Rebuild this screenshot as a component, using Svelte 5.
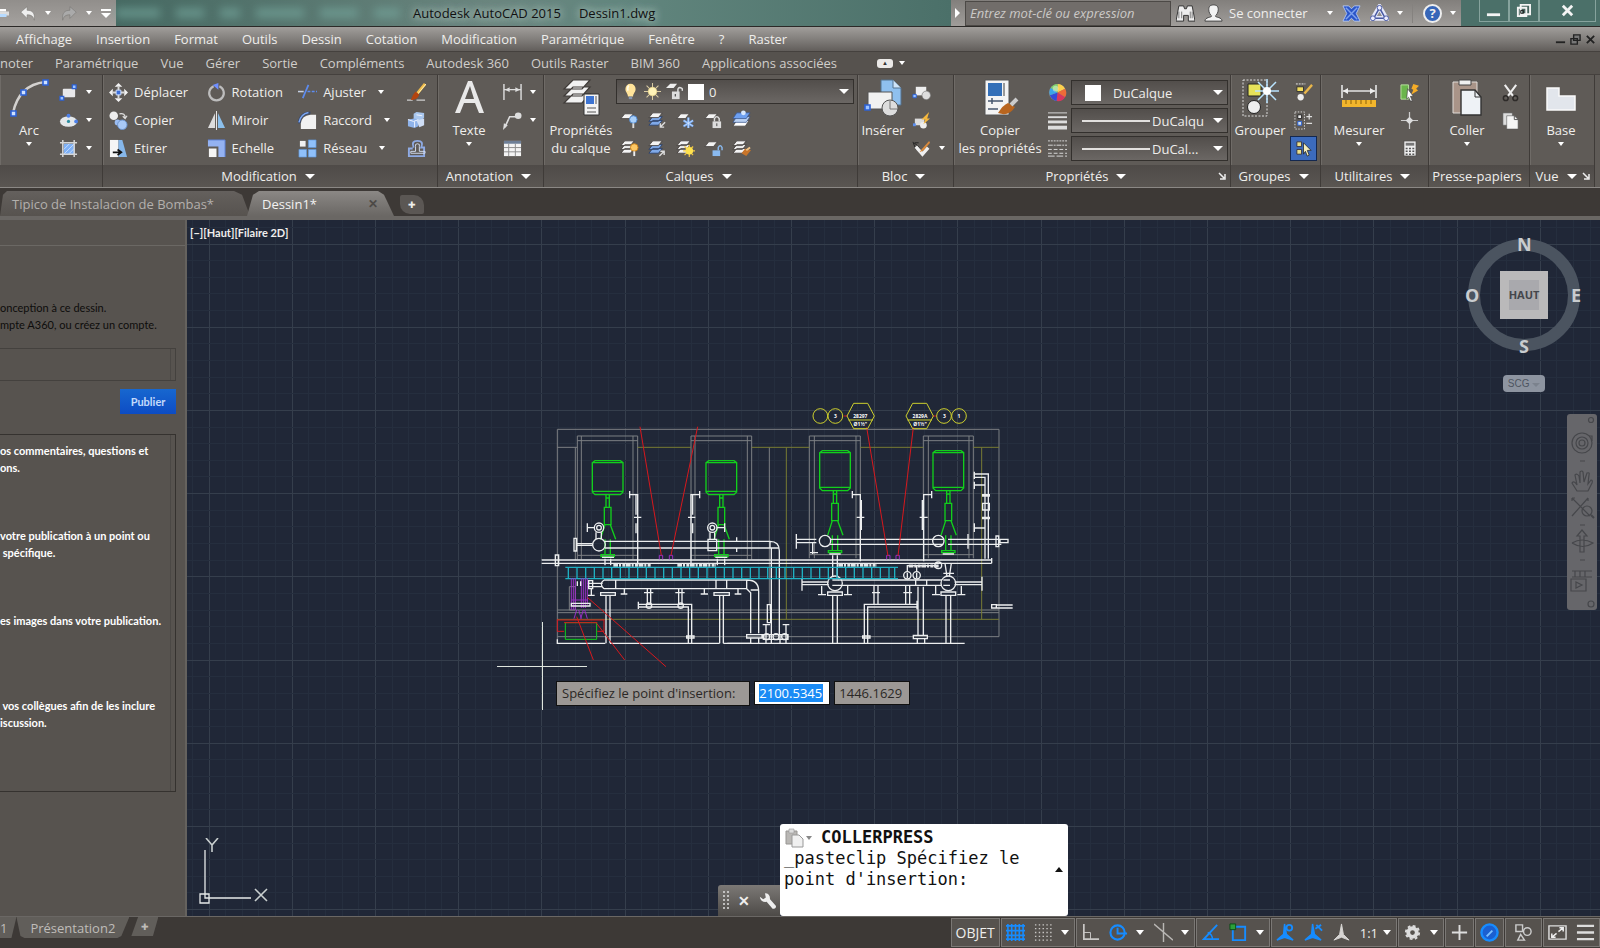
<script>
const menus = ['Affichage', 'Insertion', 'Format', 'Outils', 'Dessin', 'Cotation', 'Modification', 'Paramétrique', 'Fenêtre', '?', 'Raster']
const tabs = ['noter', 'Paramétrique', 'Vue', 'Gérer', 'Sortie', 'Compléments', 'Autodesk 360', 'Outils Raster', 'BIM 360', 'Applications associées']

const modify = [
  {icon: 'move', label: 'Déplacer'},
  {icon: 'rotate', label: 'Rotation'},
  {icon: 'trim', label: 'Ajuster', more: true},
  {icon: 'brush', name: 'Effacer'},
  {icon: 'copy', label: 'Copier'},
  {icon: 'mirror', label: 'Miroir'},
  {icon: 'fillet', label: 'Raccord', more: true},
  {icon: 'explode', name: 'Décomposer'},
  {icon: 'stretch', label: 'Etirer'},
  {icon: 'scale', label: 'Echelle'},
  {icon: 'array', label: 'Réseau', more: true},
  {icon: 'offset', name: 'Décaler'},
]
const layerTools = ['layerOff', 'layerIso', 'layerFreeze', 'layerLock', 'layerCurrent', 'layerOn', 'layerUniso', 'layerThaw', 'layerUnlock', 'layerMatch']

const notes = [
  ['os commentaires, questions et', 'ons.'],
  ['votre publication à un point ou', ' spécifique.'],
  ['es images dans votre publication.', ''],
  [' vos collègues afin de les inclure', 'iscussion.'],
]

let pointX = '2100.5345'
let pointY = '1446.1629'
let keyword = ''

// grid: one strong line for every five faint ones
const step = 83.2
const lines = (start, count) => Array.from({length: count}, (_, i) => ({at: Math.round(start + i * step / 5), major: i % 5 === 0}))
const columns = lines(21.5 - step, 150)
const rows = lines(23.5 - step, 100)

const sheets = '<path d="M5 3h10l-4 5H1zM5 7h10l-4 5H1zM5 11h10l-4 5H1z" fill="#f4f4f4" stroke="#44403d" stroke-width=".9"/>'
const blueSheets = '<path d="M5 7h10l-4 5H1zM5 11h10l-4 5H1z" fill="#7fa9e8" stroke="#2c3f66" stroke-width=".9"/><path d="M5 3h10l-4 5H1z" fill="#f4f4f4" stroke="#44403d" stroke-width=".9"/>'
const sheet = '<path d="M5 4h9l-4 5H1z" fill="#f4f4f4" stroke="#44403d" stroke-width=".8"/>'

const icons = {
  rect: '<rect x="4" y="6" width="13" height="9" rx="1" fill="#e8e8ea"/><path d="M14 2h4v4h-4zM1 14h4v4H1z" fill="#9cc3ff" stroke="#2d62d6" stroke-width="1.3"/>',
  ellipse: '<ellipse cx="10" cy="11" rx="9" ry="5.5" fill="#e3e7ea"/><circle cx="10" cy="11" r="1.7" fill="#2d8ea0"/><circle cx="10" cy="5" r="2" fill="#4c80ea"/><circle cx="18" cy="11" r="2" fill="#4c80ea"/>',
  hatch: '<path d="M5 5h11v11H5z" fill="#7eb0f5"/><path d="M5 11l6-6M5 16L16 5M10 16l6-6" stroke="#c6ddff"/><path d="M4 1v18M16 1v18M1 4h18M1 16h18" stroke="#d5d5d5" stroke-width="1.6"/>',
  move: '<path d="M10 0l4 4h-8zM10 20l4-4h-8zM0 10l4-4v8zM20 10l-4-4v8z" fill="#f2f2f2"/><path d="M10 4v12M4 10h12" stroke="#d7d7d7" stroke-width="2"/><path d="M7.500 7.500h5v5h-5z" fill="#3d6fd9" stroke="#cfe0ff"/>',
  copy: '<circle cx="5" cy="5" r="4.500" fill="#eee"/><circle cx="9" cy="12" r="3" fill="#9bbdf2"/><circle cx="14" cy="14.500" r="5" fill="#a8c8f5" stroke="#6d93cd"/><path d="M11 3c4-1 6 1 6 4m-2.500-1.500L17 8l2-3" fill="none" stroke="#ddd" stroke-width="1.300"/>',
  stretch: '<path d="M1 1h9v18H1z" fill="#f5f5f5"/><path d="M10 1h4l5 18h-9z" fill="#86b7ea"/><path d="M4 14h8m-3-3l4 3-4 3" stroke="#111" stroke-width="1.800" fill="none"/>',
  rotate: '<path d="M7 3.500A7.700 7.700 0 1 0 13 3.500" fill="none" stroke="#bdbdbd" stroke-width="2.300"/><path d="M6 2l6-2v7z" fill="#6f8fff"/>',
  mirror: '<path d="M8.500 2v16H1z" fill="#ddd"/><path d="M11.500 2v16H19z" fill="#8cc0ec"/><path d="M10 0v20" stroke="#eee"/>',
  scale: '<path d="M1 1h18v18H12V8H1z" fill="#94b2f2"/><path d="M2 10h8v9H2z" fill="#f5f5f5"/><path d="M1 1h18v18" fill="none" stroke="#5d7fd6"/>',
  trim: '<path d="M0 9h6" stroke="#c6d0e3" stroke-width="1.600"/><path d="M10 9h11" stroke="#5d8cf0" stroke-width="1.600" stroke-dasharray="3 1.500"/><path d="M11 2L5 16" stroke="#5d8cf0" stroke-width="1.800"/>',
  fillet: '<path d="M3 19V13Q4 5 13 4h6v15z" fill="#f1f1f1"/><path d="M1 13Q2 2 13 2" fill="none" stroke="#3a4b6e" stroke-width="3"/><path d="M1 12Q3 3 11 1.500" fill="none" stroke="#7da7f0" stroke-width="1.500"/>',
  array: '<path d="M2 2h6v6H2z" fill="#f1f1f1"/><path d="M11 1h8v8h-8zM1 11h8v8H1zM11 11h8v8h-8z" fill="#8fc0fa" stroke="#5f95d8" stroke-width=".7"/>',
  brush: '<path d="M0 18h6M10 18h9" stroke="#cfcfcf" stroke-width="1.500"/><path d="M19 1l-9 11" stroke="#f2bd4b" stroke-width="3"/><path d="M20 1l-9 11" stroke="#fff0b4"/><path d="M9 9l4 3q-2 6-9 6 2-6 5-9z" fill="#b4440f"/>',
  explode: '<path d="M7 3l3-2 8 1v5l-3 3-8-1z" fill="#a9c7ee"/><path d="M1 9l7-1 4 1v7l-4 2-7-2z" fill="#8fb3ea"/><path d="M10 10l8-2v7l-5 2z" fill="#cfdef5"/><path d="M1 9l6 2 5-2M8 11v6M10 4l6 1" stroke="#f1f6ff" fill="none"/>',
  offset: '<path d="M7 9q-3-7 4-7t4 7h3v9H2V10h4" fill="none" stroke="#8fabe4" stroke-width="2"/><path d="M9 8q-1-3 2-3t2 3v5h6v2H4v-2h5z" fill="none" stroke="#d4ddf0"/>',
  dim: '<path d="M1 1v17M19 1v17M1 7h18" stroke="#ddd" stroke-width="1.500"/><path d="M2 7l5-2.500v5zM18 7l-5-2.500v5z" fill="#ddd"/>',
  leader: '<path d="M2 17l5-11h7" fill="none" stroke="#ddd" stroke-width="1.700"/><circle cx="16" cy="5" r="3.500" fill="#ddd"/><path d="M0 20l1-7 4 2z" fill="#ddd"/>',
  table: '<path d="M1 2h18v16H1z" fill="#f4f4f4"/><path d="M1 2h18v3H1z" fill="#6e7f97"/><path d="M6 5v13M13 5v13M1 9h18M1 13.500h18" stroke="#8c8c8c"/>',
  bulb: '<path d="M10 1a6 6 0 0 1 6 6c0 4-3 5-3 9H7c0-4-3-5-3-9a6 6 0 0 1 6-6z" fill="#ffe39a"/><path d="M8 3q-2 2-1 6" stroke="#fffbe8" stroke-width="2" fill="none"/><path d="M8 16h4v3H8z" fill="#8796ae"/>',
  sun: '<path d="M10 0v20M0 10h20M3 3l14 14M17 3L3 17" stroke="#d9cba3" stroke-width="1.200"/><circle cx="10" cy="10" r="5" fill="#fff3b8" stroke="#e8d48c"/>',
  unlock: '<path d="M5 1h8L9 6H0z" fill="#eee"/><path d="M7 10h9v9H7z" fill="#ddd"/><path d="M14 11V8q0-3 3-2.500T19 9" stroke="#ddd" stroke-width="1.800" fill="none"/><path d="M11 13v3" stroke="#555" stroke-width="1.500"/>',
  layerOff: sheet + '<circle cx="14" cy="10" r="4" fill="#a9d0fa" stroke="#4e86cc"/><path d="M14 14v5" stroke="#ddd" stroke-width="2"/>',
  layerIso: blueSheets + '<path d="M18 13l-5 5m0-4v4h4" stroke="#ddd" fill="none" stroke-width="1.500"/>',
  layerFreeze: sheet + '<path d="M13 8v11M8 11l10 6M18 11l-10 6" stroke="#6fa4ee" stroke-width="2.500"/><path d="M13 8v11M8 11l10 6M18 11l-10 6" stroke="#d8e9ff" stroke-width=".8"/>',
  layerLock: sheet + '<path d="M9 12h9v7H9z" fill="#ddd"/><path d="M11 12V9q2.500-4 5 0v3" fill="none" stroke="#ddd" stroke-width="1.500"/><path d="M13.500 14v3" stroke="#444"/>',
  layerCurrent: '<path d="M5 11h13l-4 6H1z" fill="#fff" stroke="#44403d" stroke-width=".8"/><path d="M5 7h14l-4 6H1z" fill="#b9d0f2" stroke="#39568d" stroke-width=".8"/><path d="M5 3h14l-4 6H1z" fill="#6d9ff0" stroke="#39568d" stroke-width=".8"/><circle cx="12" cy="3" r="2.500" fill="#d7e8ff"/>',
  layerOn: sheets + '<circle cx="15" cy="10" r="4" fill="#fdc865" stroke="#c98018"/><path d="M15 14v5" stroke="#eee" stroke-width="2"/>',
  layerUniso: blueSheets + '<path d="M12 19l5-5m-4 0h4v4" stroke="#ddd" fill="none" stroke-width="1.500"/>',
  layerThaw: sheets + '<path d="M14 7v13M7.500 13.500h13M9 9l9 9M18 9l-9 9" stroke="#f2c744" stroke-width="1.300"/><circle cx="14" cy="13.500" r="4" fill="#ffe24e"/>',
  layerUnlock: sheet + '<path d="M9 13h8v6H9z" fill="#8abaf0"/><path d="M15 13v-3q2-4 4 0v3" fill="none" stroke="#8abaf0" stroke-width="1.500"/>',
  layerMatch: sheets + '<path d="M10 16l4-5 6 2-5 6z" fill="#c8752a"/><path d="M15 13l4-3" stroke="#f1c488" stroke-width="2"/>',
  block: '<path d="M4 4h11v9H4z" fill="#eee"/><circle cx="15" cy="13" r="4.500" fill="#ddd" stroke="#777" stroke-width=".7"/><path d="M1 12h3.500v3.500H1z" fill="#9cc3ff" stroke="#2d62d6"/>',
  blockEdit: '<path d="M3 8h10v7H3z" fill="#ddd"/><circle cx="12" cy="15" r="3.500" fill="#eee"/><path d="M1 13h3v3H1z" fill="#5b8ff0"/><path d="M10 9l8-8-2 7 3 0-7 6 2-5z" fill="#f6b83c"/>',
  attribute: '<path d="M2 4l4 3 6 9M1 3l3 8M3 4h4" stroke="#222" fill="none"/><path d="M4 8l7 8 6-7" stroke="#efefef" stroke-width="3.500" fill="none"/><path d="M18 2l-8 9-2 3 4-2 7-8z" fill="#d98a3c"/>',
  lineweight: '<path d="M0 2h20" stroke="#ddd"/><path d="M0 6.500h20" stroke="#ddd" stroke-width="2"/><path d="M0 11.500h20" stroke="#ddd" stroke-width="3"/><path d="M0 17.500h20" stroke="#ddd" stroke-width="4"/>',
  linetype: '<path d="M0 2h20" stroke="#ddd" stroke-dasharray="2 1"/><path d="M0 6.500h20" stroke="#ddd" stroke-dasharray="5 1 2 1"/><path d="M0 11h20M0 15h20" stroke="#ddd" stroke-dasharray="4 2"/><path d="M0 18h20" stroke="#ddd" stroke-dasharray="7 2"/>',
  wheel: '<circle cx="10" cy="10" r="9" fill="#888"/><path d="M10 10V1a9 9 0 0 1 8 5z" fill="#fbd04e"/><path d="M10 10l8-4a9 9 0 0 1 0 9z" fill="#ef6b38"/><path d="M10 10l8 5a9 9 0 0 1-9 4z" fill="#d8365f"/><path d="M10 10l-1 9a9 9 0 0 1-7-6z" fill="#3549d8"/><path d="M10 10l-8 3a9 9 0 0 1 1-8z" fill="#3aa5e8"/><path d="M10 10L3 5a9 9 0 0 1 7-4z" fill="#7fd36b"/><circle cx="8" cy="6" r="3" fill="#fff" opacity=".4"/>',
  groupEdit: '<path d="M2 1h10" stroke="#eee" stroke-dasharray="2 1"/><path d="M3 4h7v5H3z" fill="#f2dc5c" stroke="#333"/><circle cx="7" cy="15" r="3.300" fill="#eee"/><path d="M19 2l-8 9" stroke="#e9b64a" stroke-width="2.500"/>',
  groupAdd: '<path d="M1 1h10v18H1z" fill="none" stroke="#ddd" stroke-dasharray="1.500 1.500"/><path d="M4 4h4v4H4z" fill="#eee" stroke="#222"/><path d="M4 11h4v4H4z" fill="#cde" stroke="#2c62d6"/><path d="M13 6h6M16 3v6M13 13h6" stroke="#ddd" stroke-width="1.300"/>',
  groupSelect: '<path d="M3 3h5v5H3zM3 11h5v5H3z" fill="#eadf8a" stroke="#334"/><path d="M10 4l8 8-4 0 2 5-2 1-2-5-2 3z" fill="#f4eebc" stroke="#222" stroke-width=".8"/>',
  quickSelect: '<path d="M1 2h8v15H1z" fill="#6bb54c" stroke="#b9e39f"/><path d="M8 6l6 8-3 0 2 5-2 0-2-4-2 2z" fill="#fff" stroke="#444" stroke-width=".7"/><path d="M14 1l6 2-3 3 2 2-7 4 2-5-2-1z" fill="#f5ac27"/>',
  point: '<path d="M10 1v18M1 10h18" stroke="#ccc" stroke-width="1.300"/><path d="M10 6l4 4-4 4-4-4z" fill="#ddd"/>',
  calc: '<path d="M4 2h13v16H4z" fill="#eee" stroke="#4b4845"/><path d="M6 4h9v3H6z" fill="#777"/><path d="M6 10h9M6 13h9M6 16h9" stroke="#555" stroke-width="1.600" stroke-dasharray="2 1.500"/>',
  cut: '<path d="M4 2l9 12M16 2L7 14" stroke="#eee" stroke-width="2.200"/><circle cx="5" cy="16" r="2.500" fill="none" stroke="#2d2a28" stroke-width="1.600"/><circle cx="15" cy="16" r="2.500" fill="none" stroke="#2d2a28" stroke-width="1.600"/>',
  clip: '<path d="M2 2h10v13H2z" fill="#ddd" stroke="#555" stroke-width=".6"/><path d="M6 5h8l4 4v10H6z" fill="#f5f5f5" stroke="#555" stroke-width=".6"/><path d="M14 5v4h4" fill="none" stroke="#555"/>',
  print: '<path d="M0 2h12v5H0z" fill="#fff"/><path d="M0 7h18v8H0z" fill="#ddd"/><path d="M0 12h13v6H0z" fill="#b7dbff"/>',
  undo: '<path d="M2 9l7-6v4c6 0 9 3 8 11-1-4-3-6-8-6v4z" fill="#eee" stroke="#767370" stroke-width=".6"/>',
  redo: '<path d="M18 9l-7-6v4c-6 0-9 3-8 11 1-4 3-6 8-6v4z" fill="#aaa" stroke="#767370" stroke-width=".6"/>',
  find: '<path d="M3 2h5l1 3h2l1-3h5l3 16h-7v-6H8v6H0z" fill="#eee" stroke="#333"/><path d="M3 8v7M6 8v7M15 8v7M17 8v7" stroke="#777"/>',
  user: '<path d="M10 1c4 0 5 2 5 5s-2 6-3 6.500c0 2 7 1 7 5.500H1c0-4.500 7-3.500 7-5.500C7 12 5 9 5 6s1-5 5-5z" fill="#f3f3f3" stroke="#444"/>',
  exchange: '<path d="M1 2h6l3 3 3-3h6l-4 8 4 8h-6l-3-3-3 3H1l4-8z" fill="#2a55c8" stroke="#b6cdfb" stroke-width=".9"/><path d="M4 4l12 12M16 4L4 16" stroke="#7fa2ee" stroke-width="1.500"/>',
  a360: '<path d="M10 3L3 15h14z" fill="none" stroke="#e5e8fb" stroke-width="5"/><path d="M10 4L4 15h12z" fill="none" stroke="#4859a2" stroke-width="1.600"/><circle cx="10" cy="4" r="2.500" fill="#eef" stroke="#4859a2"/><circle cx="3" cy="15" r="2.500" fill="#eef" stroke="#4859a2"/><circle cx="17" cy="15" r="2.500" fill="#eef" stroke="#4859a2"/>',
  ortho: '<path d="M3 1v16h16" fill="none" stroke="#c9c7c5" stroke-width="1.800"/><path d="M3 10h7v7" fill="none" stroke="#c9c7c5"/>',
  grid: '<path d="M2 1v18M6 1v18M10 1v18M14 1v18M18 1v18M0 3h20M0 8h20M0 13h20M0 17h20" stroke="#168cff" stroke-width="1.700"/>',
  snap: '<path d="M1 2h18M1 6h18M1 10h18M1 14h18M1 18h18" stroke="#c9c7c5" stroke-width="1.400" stroke-dasharray="1.500 2.500"/>',
  polar: '<circle cx="9" cy="10" r="7.500" fill="none" stroke="#168cff" stroke-width="2.200"/><path d="M9 5v6h10" stroke="#168cff" stroke-width="2" fill="none"/>',
  iso: '<path d="M0 1l20 17M10 0v20" stroke="#b9b7b4" stroke-width="1.500"/>',
  track: '<path d="M17 2L3 17h16" fill="none" stroke="#168cff" stroke-width="2"/><path d="M7 10q5 2 5 7" fill="none" stroke="#168cff" stroke-width="1.500"/>',
  osnap: '<path d="M4 4h13v14H4z" fill="none" stroke="#168cff" stroke-width="2"/><path d="M1 1h6v6H1z" fill="#2ca03a" stroke="#0b4c15"/>',
  annoVis: '<path d="M9 1l2 11 7 6-9-3-8 3 7-6z" fill="#168cff" stroke="#168cff" stroke-width="1.500"/><circle cx="14" cy="5" r="3" fill="none" stroke="#168cff" stroke-width="2"/>',
  annoAuto: '<path d="M9 1l2 11 7 6-9-3-8 3 7-6z" fill="#168cff" stroke="#168cff" stroke-width="1.500"/><path d="M12 6l6-4M13 2l6 6" stroke="#168cff" stroke-width="2"/>',
  anno: '<path d="M10 1l2 11 6 6-8-3-8 3 6-6z" fill="#d6d4d2" stroke="#d6d4d2"/>',
  gear: '<circle cx="10" cy="10" r="4.500" fill="none" stroke="#ddd" stroke-width="4"/><circle cx="10" cy="10" r="7" fill="none" stroke="#ddd" stroke-width="2" stroke-dasharray="3 2.500"/>',
  plus: '<path d="M10 2v16M2 10h16" stroke="#ddd" stroke-width="2"/>',
  perf: '<circle cx="10" cy="10" r="8.500" fill="#1b5fd0" stroke="#168cff" stroke-width="2.500"/><path d="M7 14l6-6" stroke="#7cc0ff" stroke-width="2"/>',
  isolate: '<path d="M2 2h7v7H2zM7 12l4 6H4z" fill="none" stroke="#ccc" stroke-width="1.500"/><circle cx="14" cy="9" r="4" fill="none" stroke="#ccc" stroke-width="1.500"/>',
  clean: '<path d="M1 3h18v14H1z" fill="none" stroke="#ddd" stroke-width="1.500"/><path d="M11 9l5-4m-4 0h4v4M9 11l-5 4m0-4v4h4" stroke="#eee" stroke-width="1.600" fill="none"/>',
  menu: '<path d="M1 3h18M1 10h18M1 17h18" stroke="#ddd" stroke-width="2.500"/>',
  arc: '<path d="M4 35C8 16 18 6 36 4" fill="none" stroke="#d3d1cf" stroke-width="2.500"/><path d="M2 33h5v5H2zM12 12h5v5h-5zM34 2h5v5h-5z" fill="#cfe1ff" stroke="#2d62d6" stroke-width="1.600"/>',
  text: '<path d="M19 3h4l12 32h-5l-4-10H15l-4 10H6zM21 8l-5 13h9z" fill="#e9e9e9"/>',
  layers: '<path d="M12 2h17l-8 9H3zM12 9h17l-8 9H3zM12 16h17l-8 9H3z" fill="#f2f2f2" stroke="#3f3b38" stroke-width="1.200"/><path d="M23 16h15v21H23z" fill="#f4f4f4" stroke="#333"/><path d="M25 18h8v8h-8z" fill="#3d74d2"/><path d="M35 18v8M26 30h9M26 34h9" stroke="#555"/>',
  insert: '<path d="M18 2h12l8 8v17H18z" fill="#8fc0ef" stroke="#54728f"/><path d="M30 2v8h8" fill="#cfe4f8" stroke="#54728f"/><path d="M5 14h24v17H5z" fill="#f1f1f1" stroke="#555"/><circle cx="27" cy="30" r="8" fill="#ddd" stroke="#555"/><path d="M27 23v8h7" stroke="#777" fill="none"/><path d="M2 27h5v5H2z" fill="#9cc3ff" stroke="#2d62d6" stroke-width="1.600"/>',
  match: '<path d="M5 2h24v35H5z" fill="#f4f4f4" stroke="#555"/><path d="M8 5h14v13H8z" fill="#336fb8"/><path d="M24 5v13" stroke="#999" stroke-width="2"/><path d="M8 23h15M12 20v6M8 31h10" stroke="#45566e" stroke-width="1.500"/><path d="M18 35q5-8 10-10l7 4q-6 10-17 6z" fill="#b8651f"/><path d="M31 27l6-6" stroke="#ccc" stroke-width="4"/>',
  group: '<path d="M3 2h24v36H3z" fill="none" stroke="#ddd" stroke-dasharray="2 1.500"/><path d="M8 6h13v12H8z" fill="#e6e25a" stroke="#222"/><circle cx="14" cy="29" r="6.500" fill="#eee" stroke="#222"/><path d="M27 1v24M15 13h24M18 4l18 18M36 4L18 22" stroke="#b9e4ff" stroke-width="1.500"/><circle cx="27" cy="13" r="4" fill="#fff"/>',
  measure: '<path d="M3 7v13M37 7v13M4 13h32" stroke="#e5e5e5" stroke-width="1.600"/><path d="M4 13l5-3v6zM36 13l-5-3v6z" fill="#eee"/><path d="M3 22h34v7H3z" fill="#f2b62c"/><path d="M7 22v4M12 22v4M17 22v4M22 22v4M27 22v4M32 22v4" stroke="#8d6308"/>',
  paste: '<path d="M6 4h24v31H6z" fill="#a99488" stroke="#e0dcd8"/><path d="M12 2h12v5H12z" fill="#f0f0f0" stroke="#444"/><path d="M14 12h14l6 7v18H14z" fill="#eef2f6" stroke="#333" stroke-width="1.400"/><path d="M28 12v7h6" fill="none" stroke="#333"/>',
  base: '<path d="M6 10h12v8h16v14H6z" fill="#e2e6ec" stroke="#fafafa" stroke-width="1.500"/>',
}

// status bar items, one list for each framed cell
const status = [
  [{icon: 'grid', name: 'Grille'}, {icon: 'snap', name: 'Résolution', more: true}],
  [{icon: 'ortho', name: 'Ortho'}, {icon: 'polar', name: 'Polaire', more: true}, {icon: 'iso', name: 'Isométrique', more: true}],
  [{icon: 'track', name: 'Repérage'}, {icon: 'osnap', name: 'Accrochage', more: true}],
  [{icon: 'annoVis', name: 'Visibilité'}, {icon: 'annoAuto', name: 'Échelle automatique'}, {icon: 'anno', name: 'Annotation'}, {label: '1:1', name: 'Échelle', more: true}],
  [{icon: 'gear', name: 'Espace de travail', more: true}],
  [{icon: 'plus', name: 'Ajouter'}],
  [{icon: 'perf', name: 'Performances'}],
  [{icon: 'isolate', name: 'Isoler'}],
  [{icon: 'clean', name: 'Plein écran'}, {icon: 'menu', name: 'Personnalisation'}],
]
</script>

{#snippet icon(name)}
  <svg class="icon" viewBox="0 0 20 20" aria-hidden="true">{@html icons[name]}</svg>
{/snippet}

{#snippet big(name, words, more)}
  <button class="big">
    <svg viewBox="0 0 40 40" aria-hidden="true">{@html icons[name]}</svg>
    {#each words as word}
      <span>{word}</span>
    {/each}
    {#if more}<i class="arrow"></i>{/if}
  </button>
{/snippet}

{#snippet small(name, label, more)}
  <button class="small" aria-label={label}>
    {@render icon(name)}
    {#if more}<i class="arrow"></i>{/if}
  </button>
{/snippet}

{#snippet title(text, more, launcher)}
  <footer>
    <button>{text}{#if more}<i class="arrow wide"></i>{/if}</button>
    {#if launcher}
      <svg class="launcher" viewBox="0 0 8 8" aria-hidden="true"><path d="M1 1l5 5M7 2v5H2" fill="none" stroke="#eee" stroke-width="1.500" /></svg>
    {/if}
  </footer>
{/snippet}

{#snippet pump(x, y, tall)}
  <g transform="translate({x} {y})" class="green">
    <path d="M-46 6l8-6h76l8 6v{tall + 8}l-8 8h-76l-8-8zM-46 6h92M-46 {tall + 12}h92" />
    <g transform="translate(0 {tall})">
      <path d="M-5 23v37M5 23v37M-7 32h14M-10 60h20v52h-20zM-8 112l-14 44M8 112l16 44M-8 156v46M8 156v46M-20 202h40v6h-40z" />
    </g>
  </g>
{/snippet}

<div class="app">
  <header class="titlebar">
    <div class="quick">
      <button aria-label="Imprimer">{@render icon('print')}</button>
      <button aria-label="Annuler">{@render icon('undo')}<i class="arrow"></i></button>
      <button aria-label="Rétablir">{@render icon('redo')}<i class="arrow"></i></button>
      <button class="customize" aria-label="Personnaliser"><i class="arrow wide"></i></button>
    </div>
    <div class="glass">
      <div class="ghosts" aria-hidden="true">{#each [44, 28, 20, 48, 38, 26] as width}<i style="width: {width}px"></i>{/each}</div>
      <h1><span>Autodesk AutoCAD 2015</span><span>Dessin1.dwg</span></h1>
    </div>
    <div class="info">
      <div class="search">
        <button aria-label="Réduire"><i class="fold"></i></button>
        <input type="search" aria-label="Recherche" placeholder="Entrez mot-clé ou expression" bind:value={keyword} />
        <button aria-label="Rechercher">{@render icon('find')}</button>
      </div>
      <button class="login">{@render icon('user')}<span>Se connecter</span><i class="arrow"></i></button>
      <button aria-label="Exchange">{@render icon('exchange')}</button>
      <button aria-label="A360">{@render icon('a360')}<i class="arrow"></i></button>
      <button class="help" aria-label="Aide"><b>?</b><i class="arrow"></i></button>
    </div>
    <div class="window">
      <button aria-label="Réduire la fenêtre"><svg viewBox="0 0 16 16"><path d="M1 11h14v3H1z" fill="#f4f4f4" /></svg></button>
      <button aria-label="Restaurer"><svg viewBox="0 0 16 16"><path d="M5 2h10v10H5zM2 5h9v9H2z" fill="#48655f" stroke="#f4f4f4" stroke-width="2" /><path d="M5 8h3v3H5z" fill="none" stroke="#222" /></svg></button>
      <button aria-label="Fermer"><svg viewBox="0 0 16 16"><path d="M3 3l10 10M13 3L3 13" stroke="#f4f4f4" stroke-width="3" /></svg></button>
    </div>
  </header>

  <nav class="menubar">
    {#each menus as menu}
      <button>{menu}</button>
    {/each}
    <div class="mdi">
      <button aria-label="Réduire le dessin"><svg viewBox="0 0 12 12"><path d="M1 9h10" stroke="#222" stroke-width="2" /></svg></button>
      <button aria-label="Restaurer le dessin"><svg viewBox="0 0 12 12"><path d="M4 1h7v6H4zM1 5h7v6H1z" fill="#777" stroke="#222" stroke-width="1.500" /></svg></button>
      <button aria-label="Fermer le dessin"><svg viewBox="0 0 12 12"><path d="M2 2l8 8M10 2l-8 8" stroke="#222" stroke-width="2" /></svg></button>
    </div>
  </nav>

  <nav class="tabs">
    {#each tabs as tab}
      <button>{tab}</button>
    {/each}
    <button class="collapse" aria-label="Réduire le ruban"><b>▲</b><i class="arrow"></i></button>
  </nav>

  <div class="ribbon">
    <section>
      <div class="tools draw">
        {@render big('arc', ['Arc'], true)}
        <div class="column">
          {@render small('rect', 'Rectangle', true)}
          {@render small('ellipse', 'Ellipse', true)}
          {@render small('hatch', 'Hachures', true)}
        </div>
      </div>
      <footer></footer>
    </section>
    <section>
      <div class="tools modify">
        {#each modify as tool}
          <button class="small" aria-label={tool.name}>
            {@render icon(tool.icon)}
            {#if tool.label}<span>{tool.label}</span>{/if}
            {#if tool.more}<i class="arrow"></i>{/if}
          </button>
        {/each}
      </div>
      {@render title('Modification', true)}
    </section>
    <section>
      <div class="tools">
        {@render big('text', ['Texte'], true)}
        <div class="column annotate">
          {@render small('dim', 'Cote', true)}
          {@render small('leader', 'Ligne de repère', true)}
          {@render small('table', 'Tableau')}
        </div>
      </div>
      {@render title('Annotation', true)}
    </section>
    <section>
      <div class="tools">
        {@render big('layers', ['Propriétés', 'du calque'])}
        <div class="layers">
          <div class="combo">
            {@render icon('bulb')}{@render icon('sun')}{@render icon('unlock')}<i class="swatch"></i>
            <select aria-label="Calque"><option>0</option></select>
            <i class="arrow wide"></i>
          </div>
          <div class="toolgrid">
            {#each layerTools as tool}
              {@render small(tool, tool)}
            {/each}
          </div>
        </div>
      </div>
      {@render title('Calques', true)}
    </section>
    <section>
      <div class="tools block">
        {@render big('insert', ['Insérer'])}
        <div class="column">
          {@render small('block', 'Créer un bloc')}
          {@render small('blockEdit', 'Éditeur de blocs')}
          {@render small('attribute', 'Attributs', true)}
        </div>
      </div>
      {@render title('Bloc', true)}
    </section>
    <section>
      <div class="tools props">
        {@render big('match', ['Copier', 'les propriétés'])}
        <div class="column">
          {@render small('wheel', 'Couleur')}
          {@render small('lineweight', 'Épaisseur')}
          {@render small('linetype', 'Type de ligne')}
        </div>
        <div class="combos">
          <div class="combo color"><i class="swatch"></i><select aria-label="Couleur"><option>DuCalque</option></select><i class="arrow wide"></i></div>
          <div class="combo"><i class="stroke"></i><select aria-label="Épaisseur de ligne"><option>DuCalqu</option></select><i class="arrow wide"></i></div>
          <div class="combo"><i class="stroke"></i><select aria-label="Type de ligne"><option>DuCal...</option></select><i class="arrow wide"></i></div>
        </div>
      </div>
      {@render title('Propriétés', true, true)}
    </section>
    <section>
      <div class="tools groups">
        {@render big('group', ['Grouper'])}
        <div class="column">
          {@render small('groupEdit', 'Modifier le groupe')}
          {@render small('groupAdd', 'Ajouter au groupe')}
          <button class="small active" aria-label="Sélection de groupe" aria-pressed="true">{@render icon('groupSelect')}</button>
        </div>
      </div>
      {@render title('Groupes', true)}
    </section>
    <section>
      <div class="tools spread">
        {@render big('measure', ['Mesurer'], true)}
        <div class="column">
          {@render small('quickSelect', 'Sélection rapide')}
          {@render small('point', 'Point')}
          {@render small('calc', 'Calculatrice')}
        </div>
      </div>
      {@render title('Utilitaires', true)}
    </section>
    <section>
      <div class="tools spread">
        {@render big('paste', ['Coller'], true)}
        <div class="column">
          {@render small('cut', 'Couper')}
          {@render small('clip', 'Copier')}
        </div>
      </div>
      {@render title('Presse-papiers')}
    </section>
    <section>
      <div class="tools">
        {@render big('base', ['Base'], true)}
      </div>
      {@render title('Vue', true, true)}
    </section>
  </div>

  <nav class="files">
    <button class="file">Tipico de Instalacion de Bombas*</button>
    <div class="file current">
      <button>Dessin1*</button>
      <button class="close" aria-label="Fermer Dessin1">✕</button>
    </div>
    <button class="add" aria-label="Nouveau dessin">✚</button>
  </nav>

  <main>
    <aside>
      <div class="feed">
        <p class="intro">onception à ce dessin.<br />mpte A360, ou créez un compte.</p>
        <input aria-label="Message" />
        <button class="publish">Publier</button>
        <div class="notes">
          {#each notes as [first, second]}
            <p>{first}<br />{second}</p>
          {/each}
        </div>
      </div>
    </aside>

    <div class="canvas">
      <svg class="grid" aria-hidden="true">
        {#each columns as line}
          <line x1={line.at} x2={line.at} y1="0" y2="100%" class:major={line.major} />
        {/each}
        {#each rows as line}
          <line x1="0" x2="100%" y1={line.at} y2={line.at} class:major={line.major} />
        {/each}
      </svg>

      <span class="viewport">[−][Haut][Filaire 2D]</span>

      <svg class="drawing" viewBox="480 390 560 340" role="img" aria-label="Station de pompage">
        <g transform="translate(530 400) scale(.33333)">
          <g class="grey">
            <path d="M82 730V88H1407V710M82 142h60M136 142v338M118 560v70h18v-70zM718 142v490M82 630H1407M82 638H1407M82 710H1407" />
            <path d="M142 478V108h181v370M154 108v370M309 108v370M142 122h181M142 466h181" />
            <path d="M483 478V108h182v370M495 108v370M652 108v370M483 122h182M483 466h182" />
            <path d="M838 475V108h153v367M853 108v367M978 108v367M838 122h153M838 464h153" />
            <path d="M1180 475V108h150v367M1195 108v367M1317 108v367M1180 122h150M1180 464h150" />
          </g>
          <path class="olive" d="M323 142h160M665 142h173M991 142h189M1330 142h77M769 142v516M1355 142v516M82 658H1407" />

          {@render pump(233, 182, 80)}
          {@render pump(574, 182, 80)}
          {@render pump(915, 152, 98)}
          {@render pump(1255, 152, 98)}

          <g class="white">
            <path d="M35 480H1385M35 490H1385M1385 474v16M76 465h10v32h-10z" />
            <path d="M132 415v38h8v-38zM140 431h48M140 436h48M225 424h495q28 0 28 28v250M225 444h499v258M720 424v20h28" />
            <circle cx="207" cy="434" r="19" /><circle cx="207" cy="383" r="14" /><circle cx="207" cy="383" r="7" />
            <circle cx="547" cy="383" r="14" /><circle cx="547" cy="383" r="7" />
            <path d="M172 370v26M172 383h22M198 397v20M214 397v20M534 418h26v34h-26zM540 397v20M554 397v20M560 383h24M584 370v26M620 412v12M620 444v12" />
            <path d="M299 273v22M299 284h24v210M318 284v60M312 352h22M318 370v30M509 273v22M509 284h-26v210M488 284v60M474 352h22M488 370v30" />
            <path d="M222 540h430q34 0 34 34v126M222 566h428l12 12v122M222 540q-16 12 0 26M172 550h46M172 560h46M176 542h12v24h-12zM257 540v26M558 540v26M590 540v26M650 540v26M662 570h24" />
            <path d="M212 578h44v8h-44zM552 578h46v8h-46zM228 586v144M240 586v144M569 586v144M580 586v144M272 582h20M283 566v16M512 582h22M523 566v16M614 582h20M624 566v16M184 566v20M174 586h20" />
            <path d="M352 566v50M362 566v50M446 566v50M456 566v50M342 578h28M436 578h28M325 605v22M325 613h160v117M325 621h150v109M470 708h22v6h-22z" /><circle cx="357" cy="617" r="8" /><circle cx="452" cy="617" r="8" />
            <path d="M82 718v12h144M240 730h329M580 730h85M650 704h46v10h-46zM662 714v16M686 714v16M712 614h10v54h-10zM708 674v56M698 674h22M768 674v56M758 674h20M724 702v28M750 702v28M700 704h74v14h-74z" /><circle cx="710" cy="710" r="9" /><circle cx="764" cy="710" r="9" /><circle cx="738" cy="710" r="9" />
            <path d="M799 402v44M799 418h60M799 428h60M900 418H1240M900 433H1240M1314 402v44M1254 418h160M1254 433h160M1398 408h8v32h-8zM1410 418h24v10h-24zM848 428v34M840 458h24" />
            <circle cx="885" cy="423" r="17" /><circle cx="1225" cy="423" r="17" />
            <path d="M967 273v22M967 284h24v200M991 352h12M980 352h12M994 300v90M1205 273v22M1205 284h-24v200M1169 352h24M1177 300v90" />
            <path d="M1333 215v22M1333 222h42v254M1333 232h32v244M1333 245v22M1333 255h32M1358 284h20v4h-20zM1358 310h20v20h-20zM1333 370v26M1333 384h32M1358 352h20v4h-20z" />
            <path d="M816 536v36M816 546h80M816 554h80M926 540h310M926 556h310M1356 530v42M1274 546h82M1274 554h82M1157 540v18M1190 540v18" />
            <circle cx="915" cy="550" r="22" /><circle cx="1255" cy="550" r="22" /><path d="M907 540h20M907 556h20M1240 540h20M1240 556h20" />
            <path d="M893 576h44v10h-44zM1233 576h44v10h-44zM908 586v144M922 586v144M1248 586v144M1262 586v144M864 584h24M875 558v26M942 584h24M953 558v26M1206 584h24M1217 558v26M1282 584h24M1294 558v26" />
            <path d="M1032 558v54M1044 558v54M1026 578h24M1127 558v54M1139 558v54M1120 578h26M1003 730V613h158M1013 730V621h148M1161 602v26M998 708h22v6h-22zM1164 560v144M1180 560v144M1150 706h42v10h-42zM1162 716v14M1184 716v14" />
            <circle cx="1132" cy="526" r="11" /><circle cx="1160" cy="526" r="11" /><circle cx="1225" cy="496" r="10" /><path d="M1132 515v-18h92M1160 515v-18M1240 520h32M1245 490l6 40M1264 490l-6 40M1132 518v16M1160 518v16" />
            <path d="M1385 614h14v10h-14zM1399 615h49M1399 624h49M592 730H1304" />
            <path d="M216 472h36M556 472h36M898 462h34M1238 462h34M225 476v20M242 476v20M562 476v20M584 476v20M908 466v62M922 466v62" />
          </g>
          <path class="rubble" d="M250 496h112M442 496h116M925 496h115M1136 498h90" />
          <path class="cyan" d="M106 502H1104M106 536H1104M115 502v34M141 502v34M167 502v34M193 502v34M219 502v34M245 502v34M271 502v34M297 502v34M323 502v34M349 502v34M375 502v34M401 502v34M427 502v34M453 502v34M479 502v34M505 502v34M531 502v34M557 502v34M583 502v34M609 502v34M635 502v34M661 502v34M687 502v34M713 502v34M739 502v34M765 502v34M791 502v34M817 502v34M843 502v34M869 502v34M895 502v34M921 502v34M947 502v34M973 502v34M999 502v34M1025 502v34M1051 502v34M1077 502v34M1094 502v34" />
          <path class="violet" d="M124 534v96M130 534v96M136 534v96M154 534v90M160 534v90M166 534v90M172 534v80M124 600h50M140 630l-8 26M146 630l8 26M164 630l8 26M160 630l-8 26M388 478v-12h10v12M418 478v-12h10v12M1070 478v-12h10v12M1098 478v-12h10v12" />
          <path class="white" d="M124 610h56v8h-56zM142 544v14M152 544v14" />
          <path class="green" d="M106 668h94v50h-94z" />
          <path class="red" d="M82 658v36h20M222 658v36h-20M82 660h140M102 668h100M140 650l50 130M200 670l84 110M172 592l236 208M330 80l64 386M503 80l-80 386M1010 82l64 386M1150 82l-46 386M941 48h12M1208 48h12" />
          <g class="yellow">
            <circle cx="871" cy="48" r="22" /><circle cx="916" cy="48" r="22" /><circle cx="1242" cy="48" r="22" /><circle cx="1287" cy="48" r="22" />
            <path d="M951 48l20-38h42l20 38-20 38h-42zM955 60h74M1128 48l20-38h42l20 38-20 38h-42zM1132 60h74" />
          </g>
          <g class="tags">
            <text x="916" y="53">3</text><text x="1243" y="53">3</text><text x="1287" y="53">1</text>
            <text x="991" y="54">28297</text><text x="1170" y="54">2829A</text>
            <text x="991" y="79">Ø1½"</text><text x="1170" y="79">Ø1½"</text>
          </g>
        </g>
        <path class="cross" d="M542 622v88M497 666h90" />
      </svg>

      <form class="prompt">
        <label for="px">Spécifiez le point d'insertion:</label>
        <span class="value"><input id="px" size="9" bind:value={pointX} /></span>
        <input class="second" aria-label="Y" size="9" bind:value={pointY} />
      </form>

      <svg class="ucs" viewBox="0 0 80 80" aria-label="SCU">
        <path d="M10 12v48h46M5 56h9v9H5z" fill="none" stroke="#e6eaea" stroke-width="1.300" />
        <path d="M11 0l6 7 6-7M17 7v7M60 51l12 12M72 51L60 63" fill="none" stroke="#c9cfcf" stroke-width="1.600" />
      </svg>

      <div class="cube">
        <svg viewBox="0 0 120 120" aria-hidden="true"><circle cx="60" cy="60" r="50" fill="none" stroke="#4b5460" stroke-width="12" /></svg>
        <b class="n">N</b><b class="e">E</b><b class="s">S</b><b class="o">O</b>
        <button>HAUT</button>
      </div>
      <button class="scg">SCG <i></i></button>

      <div class="navbar">
        <svg viewBox="0 0 30 196" fill="none" stroke="#46474b" stroke-width="1.200" aria-label="Barre de navigation">
          <circle cx="24" cy="6" r="2.500" />
          <circle cx="15" cy="29" r="10" /><circle cx="15" cy="29" r="6" /><circle cx="15" cy="29" r="3" /><path d="M22 22h3v5M13 47h5M13 111h5M13 146h5" />
          <path d="M10 77l-5-8q2-3 5 2l-2-10q2-2 4 1l1 7V58q2-2 3 0l1 10 3-9q3-1 2 2l-1 9 3-4q2 0 1 3l-4 8z" />
          <path d="M5 84l18 18M5 102l16-18M5 84h3M5 84v3M21 84v3" /><circle cx="20" cy="97" r="5" /><path d="M24 101l3 3" stroke-width="2" />
          <path d="M13 138v-16h-3l5-6 5 6h-3v16zM5 129q10-6 21 0-10 7-21 0" />
          <path d="M5 157h20M5 163h20M8 157v6M13 157v6M18 157v6M4 165h15v12H4zM9 168l6 3-6 3z" />
          <circle cx="24" cy="190" r="3" />
        </svg>
      </div>

      <div class="command">
        <div class="handle">
          <svg viewBox="0 0 8 20" aria-hidden="true"><path d="M2 0v20M6 0v20" stroke="#ddd" stroke-width="1.500" stroke-dasharray="2 2" /></svg>
          <button aria-label="Fermer la ligne de commande">✕</button>
          <button aria-label="Options"><svg class="wrench" viewBox="0 0 20 20"><path d="M1 5l4 3 3-2-1-5q6 0 6 7l7 8q0 4-4 3l-7-8q-7 1-8-6z" fill="#eee" /></svg></button>
        </div>
        <div class="console">
          <p><svg viewBox="0 0 20 20" aria-hidden="true"><path d="M2 3h11v13H2z" fill="#b9b7b4" stroke="#989693" /><path d="M5 1h5v4H5z" fill="#ddd" stroke="#999" stroke-width=".6" /><path d="M8 7h7l4 4v8H8z" fill="#f0f0f0" stroke="#999" /></svg><i class="arrow"></i><b>COLLERPRESS</b></p>
          <p>_pasteclip Spécifiez le<br />point d'insertion:</p>
          <button aria-label="Historique"><i></i></button>
        </div>
      </div>
    </div>
  </main>

  <footer class="statusbar">
    <nav>
      <button class="sheet first">1</button>
      <button class="sheet">Présentation2</button>
      <button class="sheet plus" aria-label="Nouvelle présentation">✚</button>
    </nav>
    <div class="cells">
      <div class="cell"><button class="model">OBJET</button></div>
      {#each status as cell}
        <div class="cell" class:roomy={cell[0].icon === 'isolate'}>
          {#each cell as item}
            <button aria-label={item.name} class:ratio={item.label}>
              {#if item.icon}{@render icon(item.icon)}{:else}{item.label}{/if}
              {#if item.more}<i class="arrow"></i>{/if}
            </button>
          {/each}
        </div>
      {/each}
    </div>
  </footer>
</div>

<style>
:global(body) {
  margin: 0;
  background: #3d3936;
}

.app {
  display: flex;
  flex-direction: column;
  height: 100vh;
  overflow: hidden;
  font: 13px/18px "Open Sans", "Noto Sans", sans-serif;
  color: #efeeec;
}

button,
input,
select {
  font: inherit;
  color: inherit;
  background: none;
  border: 0;
  margin: 0;
  padding: 0;
  white-space: nowrap;
}

p {
  margin: 0;
}

.icon {
  display: block;
  flex: none;
  width: 20px;
  height: 20px;
}

.arrow {
  display: inline-block;
  flex: none;
  border: 3px solid transparent;
  border-top: 4px solid #fff;
  border-bottom: 0;
}

.arrow.wide {
  border-width: 5px 5px 0;
}

.titlebar {
  display: flex;
  flex: none;
  height: 26px;
  border-bottom: 1px solid #2b2927;
  background: #4b7069;
}

.titlebar button {
  display: flex;
  align-items: center;
  gap: 8px;
}

.quick {
  display: flex;
  align-items: center;
  gap: 9px;
  width: 116px;
  background: linear-gradient(#918e8b, #a5a29f);
}

.quick .icon {
  width: 18px;
  height: 18px;
}

.quick button:first-child .icon {
  width: 10px;
}

.quick .customize {
  border-top: 2px solid #fff;
  padding-top: 2px;
}

.glass {
  position: relative;
  display: flex;
  flex: 1;
  align-items: center;
  background: linear-gradient(90deg, #466962, #6a857e 45%, #62867e 60%, #4b7069);
}

.ghosts {
  position: absolute;
  left: 0;
  display: flex;
  gap: 16px;
  filter: blur(4px);
  opacity: 0.6;
}

.ghosts i {
  height: 10px;
  background: #76a89e;
}

h1 {
  display: flex;
  gap: 18px;
  margin: 0 0 0 293px;
  padding: 0 4px;
  font-size: 13px;
  font-weight: 400;
  color: #111;
  text-shadow: 0 0 8px #b7cdc8, 0 0 8px #b7cdc8;
}

.info {
  display: flex;
  align-items: center;
  gap: 9px;
  padding-right: 5px;
  background: linear-gradient(#827f7c, #a09d9a);
}

.search {
  display: flex;
  align-items: center;
  gap: 5px;
}

.info input {
  box-sizing: border-box;
  width: 206px;
  height: 25px;
  padding: 0 4px;
  background: #716d6a;
  border: 1px solid #4c4946;
}

.info input::placeholder {
  color: #cbc9c7;
  font-style: italic;
  opacity: 1;
}

.fold {
  margin-left: 4px;
  border: 5px solid transparent;
  border-left-color: #fff;
  border-right: 0;
}

.info .icon {
  width: 19px;
  height: 19px;
}

.info .login {
  gap: 6px;
}

.login span {
  width: 92px;
  text-align: left;
}

.info .help {
  padding-left: 10px;
  border-left: 1px solid #85827f;
}

.help b {
  width: 15px;
  border: 2px solid #eee;
  border-radius: 50%;
  background: #3766b8;
  line-height: 15px;
}

.window {
  display: flex;
  width: 139px;
  padding: 0 4px 4px 18px;
  box-sizing: border-box;
}

.window button {
  flex: 1;
  justify-content: center;
  border: 1px solid #86a39d;
  border-top: 0;
}

.window button:last-child {
  flex: 2;
}

.window svg {
  width: 15px;
  height: 15px;
}

.menubar {
  display: flex;
  flex: none;
  align-items: center;
  gap: 24px;
  height: 24px;
  padding: 0 4px 0 16px;
  background: linear-gradient(#a19e9b, #827f7c 50%, #625e5b);
  border-bottom: 1px solid #45413e;
}

.mdi {
  display: flex;
  gap: 4px;
  margin-left: auto;
}

.mdi svg {
  display: block;
  width: 11px;
  height: 11px;
}

.tabs {
  display: flex;
  flex: none;
  align-items: center;
  gap: 22px;
  height: 22px;
  background: #56524e;
  border-bottom: 1px solid #45413e;
  color: #d0cecb;
}

.collapse {
  display: flex;
  align-items: center;
  gap: 6px;
  margin-left: 18px;
}

.collapse b {
  width: 16px;
  border-radius: 3px;
  background: #ebe9e7;
  color: #333;
  font-size: 6px;
  line-height: 9px;
}

.ribbon {
  display: grid;
  flex: none;
  grid-template-columns: 103fr 335fr 106fr 314fr 96fr 277fr 90fr 108fr 101fr 65fr;
  padding-right: 5px;
  background: #5f5b57;
  border-bottom: 1px solid #8b8885;
}

section {
  display: flex;
  flex-direction: column;
  min-width: 0;
  border-right: 1px solid #3f3b38;
  box-shadow: inset 1px 0 #6f6b67;
}

.tools {
  display: flex;
  height: 86px;
  padding: 3px 0 1px 5px;
}

section > footer {
  display: flex;
  align-items: center;
  height: 22px;
  padding-right: 4px;
  background: linear-gradient(#4f4b48, #5a5652);
}

section > footer button {
  flex: 1;
}

section > footer .arrow {
  margin: 0 0 2px 8px;
}

.launcher {
  width: 8px;
  height: 8px;
}

.big {
  display: flex;
  flex-direction: column;
  align-items: center;
  width: 52px;
  flex: none;
}

.big svg {
  width: 40px;
  height: 40px;
  margin-bottom: 3px;
}

.big .arrow {
  margin-top: 3px;
}

.draw {
  padding-left: 3px;
}

.column {
  display: flex;
  flex-direction: column;
}

.small {
  display: flex;
  align-items: center;
  height: 28px;
  gap: 8px;
  padding: 0 4px;
}

.small .icon {
  width: 19px;
  height: 19px;
}

.annotate {
  padding-left: 4px;
}

.modify {
  display: grid;
  grid-template-columns: 97fr 91fr 108fr 34fr;
  grid-auto-rows: 28px;
  padding-left: 2px;
}

.modify span {
  margin-left: -2px;
}

.modify .arrow {
  margin-left: 4px;
}

.ribbon section:nth-child(4) .big {
  width: 64px;
}

.layers {
  flex: 1;
  min-width: 0;
  padding: 1px 3px 0;
}

.combo {
  display: flex;
  align-items: center;
  gap: 6px;
  height: 23px;
  padding: 0 4px 0 5px;
  border: 1px solid #33302d;
  background: linear-gradient(#524e4b, #6b6764);
}

.combo .icon {
  width: 17px;
  height: 17px;
}

.layers .combo {
  gap: 5px;
}

.combo select {
  appearance: none;
  flex: 1;
  min-width: 0;
  height: 20px;
}

.swatch {
  flex: none;
  width: 16px;
  height: 16px;
  background: #fff;
}

.toolgrid {
  display: grid;
  grid-template-columns: repeat(5, 28px);
  padding-top: 1px;
}

.block {
  padding-left: 0;
}

.block .big {
  width: 50px;
}

.props .big {
  width: 88px;
}

.props {
  padding-left: 2px;
}

.combos {
  flex: 1;
  display: flex;
  flex-direction: column;
  gap: 3px;
  padding: 2px 2px 0 0;
  min-width: 0;
}

.combos .combo {
  padding-left: 10px;
  gap: 2px;
}

.combos .color {
  padding-left: 13px;
  gap: 12px;
}

.stroke {
  width: 68px;
  height: 2px;
  background: #e2e0de;
}

.groups {
  padding-left: 3px;
}

.groups .small {
  padding-left: 8px;
}

.groups .active {
  width: 27px;
  height: 25px;
  margin: 2px 0 0 4px;
  border: 1px solid #14284f;
  background: #3c6bbd;
  padding: 0 3px;
}

.spread {
  justify-content: space-between;
  padding: 3px 5px 1px 12px;
}

.files {
  display: flex;
  flex: none;
  align-items: flex-end;
  height: 28px;
  border-bottom: 4px solid #6a6764;
  background: #3d3936;
}

.file {
  display: flex;
  align-items: center;
  justify-content: space-between;
  width: 250px;
  height: 25px;
  box-sizing: border-box;
  padding: 0 12px;
  background: linear-gradient(#64605d, #57534f);
  color: #b3b0ad;
  clip-path: polygon(0 100%, 3px 15%, 7px 0, calc(100% - 16px) 0, calc(100% - 8px) 15%, 100% 100%);
}

.file.current {
  width: 147px;
  margin-left: -3px;
  padding: 0 16px 0 15px;
  background: linear-gradient(#8b8885, #6a6764);
  color: #f3f2f1;
  clip-path: polygon(0 100%, 6px 15%, 12px 0, calc(100% - 16px) 0, calc(100% - 10px) 15%, 100% 100%);
}

.close {
  color: #4c4946;
  font-weight: 700;
  font-size: 12px;
}

.add {
  width: 24px;
  height: 19px;
  margin: 0 0 2px 6px;
  border-radius: 2px 10px 2px 10px;
  background: #5b5754;
  font-size: 9px;
}

main {
  display: flex;
  flex: 1;
  min-height: 0;
}

aside {
  box-sizing: border-box;
  flex: none;
  width: 187px;
  padding-top: 25px;
  background: #57534f;
  border-right: 2px solid #65625e;
  font: 11px/17px Lato, "Open Sans", sans-serif;
  white-space: pre;
}

.feed {
  display: flex;
  flex-direction: column;
  align-items: flex-start;
  padding: 53px 9px 0 0;
  border-top: 1px solid #6b6864;
}

.intro {
  color: #0e0d0c;
}

.feed input {
  box-sizing: border-box;
  width: 100%;
  height: 33px;
  margin: 15px 0 8px;
  border: 1px solid #44413e;
  border-left: 0;
  box-shadow: inset -4px 0 #57534f, inset -5px 0 #4b4845;
}

.publish {
  align-self: flex-end;
  width: 56px;
  height: 25px;
  background: linear-gradient(#1767cf, #0d4cc4);
  color: #c3dafb;
  font-weight: 700;
}

.notes {
  display: flex;
  flex-direction: column;
  gap: 51px;
  width: 100%;
  box-sizing: border-box;
  height: 358px;
  margin-top: 20px;
  padding-top: 7px;
  border: 1px solid #35322f;
  border-left: 0;
  color: #fff;
  font-weight: 700;
  box-shadow: inset -4px 0 #57534f, inset -5px 0 #4b4845;
}

.notes p {
  height: 34px;
}

.canvas {
  position: relative;
  flex: 1;
  overflow: hidden;
  background: #202737;
}

.canvas > * {
  position: absolute;
}

.grid {
  width: 100%;
  height: 100%;
  shape-rendering: crispEdges;
}

.grid line {
  stroke: #252e3e;
}

.grid line.major {
  stroke: #353e4c;
}

.viewport {
  left: 3px;
  top: 4px;
  font-family: Lato, "Open Sans", sans-serif;
  font-size: 11px;
  font-weight: 700;
}

.drawing {
  left: 293px;
  top: 170px;
  width: 560px;
  height: 340px;
  fill: none;
}

.drawing g,
.drawing path {
  stroke-width: 3;
}

.drawing .white,
.drawing .white *,
.drawing .green path {
  stroke-width: 4;
}

.drawing .cross {
  stroke: #dfe6df;
  stroke-width: 1;
  shape-rendering: crispEdges;
}

.grey { stroke: #7c7f84; }
.olive { stroke: #777b33; }
.white { stroke: #eceeef; }
.green { stroke: #12cf1c; }
.cyan { stroke: #1fb0c2; }
.violet { stroke: #9a2fc6; }
.red { stroke: #d8181d; }
.yellow { stroke: #cdcf2d; }

.drawing .cyan {
  stroke-width: 4;
}

.drawing .rubble {
  stroke: #e4e6e8;
  stroke-width: 9;
  stroke-dasharray: 14 3 6 4 9 2;
}

.tags {
  fill: #fff;
  font: 700 15px "Open Sans", sans-serif;
  text-anchor: middle;
}

.prompt {
  left: 369px;
  top: 461px;
  display: flex;
  align-items: flex-start;
  gap: 4px;
  color: #2b2826;
}

.prompt label {
  padding: 2px 14px 3px 5px;
  background: #9c9895;
  border: 1px solid #111;
}

.prompt .value {
  padding: 2px 6px 2px 4px;
  border: 1px solid #111;
  background: #fff;
}

.prompt input {
  display: block;
  box-sizing: border-box;
  width: 64px;
  height: 18px;
}

.prompt .value input {
  background: #1a8bf5;
  color: #fff;
}

.prompt .second {
  width: 76px;
  height: 24px;
  padding: 0 4px;
  border: 1px solid #111;
  background: #9c9895;
}

.ucs {
  left: 8px;
  bottom: -2px;
  width: 80px;
  height: 80px;
}

.cube {
  right: 16px;
  top: 15px;
  width: 120px;
  height: 120px;
  font-size: 18px;
  color: #c9cccf;
}

.cube > * {
  position: absolute;
}

.cube .n { left: 53px; top: 0; }
.cube .s { left: 55px; bottom: 0; }
.cube .e { right: 3px; top: 51px; }
.cube .o { left: 1px; top: 51px; }

.cube button {
  left: 36px;
  top: 36px;
  width: 48px;
  height: 48px;
  border: 9px solid #bab9ba;
  background: #a9a9ad;
  color: #44464b;
  font-size: 11px;
  font-weight: 700;
  display: flex;
  align-items: center;
  justify-content: center;
}

.scg {
  right: 55px;
  top: 155px;
  width: 42px;
  height: 17px;
  border-radius: 4px;
  background: #8d94a0;
  color: #4e5560;
  font-family: "Liberation Sans", sans-serif;
  font-size: 10px;
  line-height: 17px;
}

.scg i {
  display: inline-block;
  border: 4px solid transparent;
  border-top-color: #7b828d;
  border-bottom: 0;
}

.navbar {
  right: 3px;
  top: 194px;
  width: 30px;
  height: 196px;
  border-radius: 3px;
  background: #66666a;
}

.command {
  left: 531px;
  bottom: 0;
  display: flex;
  align-items: flex-end;
}

.handle {
  display: flex;
  align-items: center;
  justify-content: space-around;
  width: 62px;
  height: 31px;
  border-radius: 3px 0 0 0;
  background: linear-gradient(#7c7976, #4d4a47);
  font-size: 14px;
  font-weight: 700;
}

.handle svg {
  display: block;
  width: 8px;
  height: 20px;
}

.handle .wrench {
  width: 17px;
}

.console {
  box-sizing: border-box;
  width: 288px;
  height: 92px;
  position: relative;
  padding: 3px 4px 0;
  border-radius: 3px;
  background: #fff;
  color: #111;
  font: 17px/21px "DejaVu Sans Mono", "Liberation Mono", monospace;
}

.console p:first-child {
  display: flex;
  align-items: center;
}

.console p svg {
  width: 20px;
  height: 20px;
}

.console .arrow {
  border-top-color: #888;
  margin: 0 9px 0 2px;
}

.console button {
  position: absolute;
  right: 5px;
  top: 32px;
}

.console button i {
  display: inline-block;
  border: 4px solid transparent;
  border-bottom: 5px solid #111;
  border-top: 0;
}

.statusbar {
  display: flex;
  flex: none;
  justify-content: space-between;
  height: 32px;
  box-sizing: border-box;
  border-top: 1px solid #6a6764;
  background: #3d3936;
}

.statusbar nav {
  display: flex;
  align-items: flex-start;
}

.sheet {
  height: 21px;
  padding: 0 14px;
  background: #615e5a;
  color: #bfbcb9;
  clip-path: polygon(0 0, 100% 0, calc(100% - 8px) 90%, calc(100% - 12px) 100%, 8px 100%, 4px 90%);
}

.sheet.first {
  padding: 0 9px 0 0;
  clip-path: polygon(0 0, 100% 0, calc(100% - 5px) 100%, 0 100%);
}

.sheet.plus {
  width: 27px;
  height: 19px;
  margin-left: 2px;
  padding: 0;
  font-size: 9px;
  clip-path: polygon(25% 0, 100% 0, 80% 100%, 0 100%);
}

.cells {
  display: flex;
  gap: 1px;
  padding-top: 1px;
}

.cell {
  display: flex;
  align-items: center;
  gap: 9px;
  height: 27px;
  padding: 0 4px;
  border: 1px solid #7b7875;
  background: #56524e;
}

.cell.roomy {
  padding: 0 8px;
}

.cell button {
  display: flex;
  align-items: center;
  gap: 8px;
}

.cell .ratio {
  gap: 5px;
}

.cell .icon {
  width: 19px;
  height: 19px;
}

.cell .arrow {
  margin-right: 1px;
  border-width: 5px 4px 0;
}

.cell .model {
  font-size: 14px;
}
</style>
